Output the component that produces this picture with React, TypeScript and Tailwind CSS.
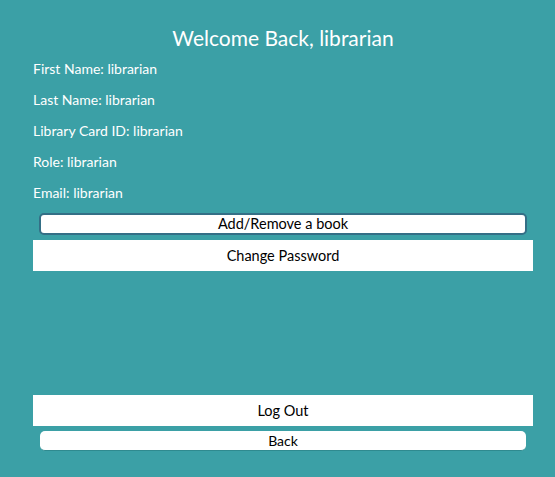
import React from 'react';

const user = {
  firstName: 'librarian',
  lastName: 'librarian',
  cardId: 'librarian',
  role: 'librarian',
  email: 'librarian',
};

export default function App() {
  const rows = [
    ['First Name', user.firstName],
    ['Last Name', user.lastName],
    ['Library Card ID', user.cardId],
    ['Role', user.role],
    ['Email', user.email],
  ];

  return (
    <div className="min-h-screen bg-[#3ba0a6] font-['Lato','Noto_Sans',sans-serif] text-white">
      <div className="ml-[33px] w-[500px] pt-[25px]">
        <h1 className="text-center text-[21px] leading-[25px]">Welcome Back, {user.firstName}</h1>

        <div className="mt-[3px]">
          {rows.map(([label, value]) => (
            <p key={label} className="h-[31px] text-[14px] leading-[31px]">
              {label}: {value}
            </p>
          ))}
        </div>

        <div className="flex flex-col">
          <button className="mx-[6px] mt-[5px] h-[22px] rounded-[5px] border-2 border-[#346f86] bg-white text-[14.5px] leading-[18px] text-black">
            Add/Remove a book
          </button>
          <button className="mt-[5px] h-[31px] w-full bg-white text-[14.5px] text-black">
            Change Password
          </button>

          <button className="mt-[124px] h-[31px] w-full bg-white text-[14.5px] text-black">
            Log Out
          </button>
          <button className="mx-[7px] mt-[5px] h-[20px] rounded-[5px] border-b border-[#2f8a8f] bg-white text-[14px] leading-[19px] text-black">
            Back
          </button>
        </div>
      </div>
    </div>
  );
}
